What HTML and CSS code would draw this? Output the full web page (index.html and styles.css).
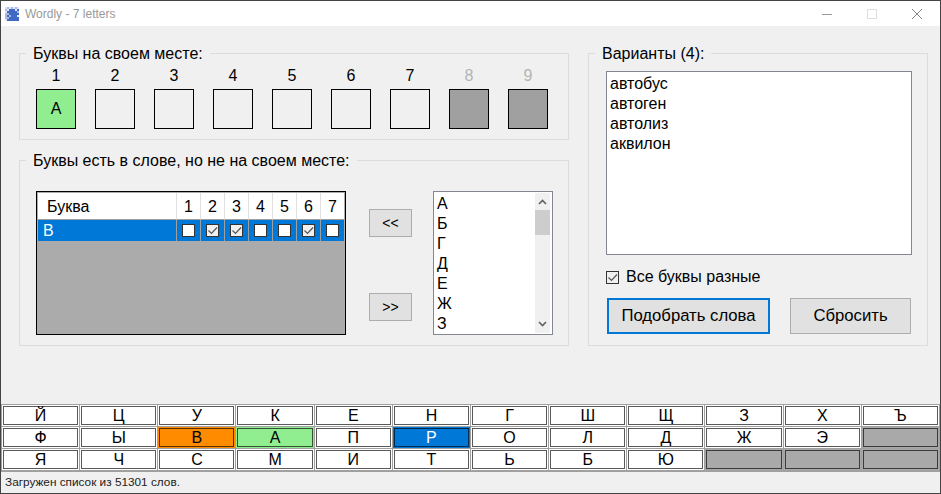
FILE: index.html
```html
<!DOCTYPE html>
<html lang="en">
<head>
    <meta charset="UTF-8">
    <meta name="viewport" content="width=device-width, initial-scale=1.0">
    <title>Wordly - 7 letters</title>
    <link rel="stylesheet" href="styles.css">
</head>
<body>
<div class="window">
    <div class="titlebar">
        <svg class="app-icon" width="14" height="14" viewBox="0 0 14 14">
            <rect width="14" height="14" fill="#a9bce6"/>
            <path d="M0 0h2v2H0zM4 0h2v2H4zM8 0h2v2H8zM12 0h2v2h-2zM2 2h2v2H2zM10 2h2v2h-2zM0 4h2v2H0zM12 8h2v2h-2zM0 12h2v2H0z" fill="#dfe6f7"/>
            <path d="M4 2h6v2H4zM12 2h2v2h-2zM2 4h10v2H2zM4 6h10v2H4zM2 8h2v2H2zM6 8h6v2H6zM4 10h10v2H4zM2 12h12v2H2z" fill="#4169c4"/>
        </svg>
        <span class="app-title">Wordly - 7 letters</span>
        <div class="controls">
            <svg width="10" height="10" viewBox="0 0 10 10"><path d="M0 5.5h10" stroke="#999" fill="none"/></svg>
            <svg width="10" height="10" viewBox="0 0 10 10"><path d="M.5.5h9v9h-9z" stroke="#ddd" fill="none"/></svg>
            <svg width="10" height="10" viewBox="0 0 10 10"><path d="M0 0l10 10M10 0L0 10" stroke="#888" fill="none"/></svg>
        </div>
    </div>

    <div class="main">
        <div class="left-col">
            <fieldset class="group group-places">
                <legend>Буквы на своем месте:</legend>
                <div class="slots">
                    <div class="slot"><span class="slot-num">1</span><span class="slot-box green">А</span></div>
                    <div class="slot"><span class="slot-num">2</span><span class="slot-box"></span></div>
                    <div class="slot"><span class="slot-num">3</span><span class="slot-box"></span></div>
                    <div class="slot"><span class="slot-num">4</span><span class="slot-box"></span></div>
                    <div class="slot"><span class="slot-num">5</span><span class="slot-box"></span></div>
                    <div class="slot"><span class="slot-num">6</span><span class="slot-box"></span></div>
                    <div class="slot"><span class="slot-num">7</span><span class="slot-box"></span></div>
                    <div class="slot off"><span class="slot-num">8</span><span class="slot-box"></span></div>
                    <div class="slot off"><span class="slot-num">9</span><span class="slot-box"></span></div>
                </div>
            </fieldset>

            <fieldset class="group group-misplaced">
                <legend>Буквы есть в слове, но не на своем месте:</legend>
                <div class="misplaced-row">
                    <div class="letters">
                        <table>
                            <thead>
                                <tr>
                                    <th class="col-letter">Буква</th>
                                    <th>1</th><th>2</th><th>3</th><th>4</th><th>5</th><th>6</th><th>7</th>
                                </tr>
                            </thead>
                            <tbody>
                                <tr>
                                    <td class="col-letter">В</td>
                                    <td><span class="check"></span></td>
                                    <td><span class="check"><svg width="11" height="11" viewBox="0 0 11 11"><path d="M1.5 5.5l3 3 5.5-6" stroke="#555" stroke-width="1.2" fill="none"/></svg></span></td>
                                    <td><span class="check"><svg width="11" height="11" viewBox="0 0 11 11"><path d="M1.5 5.5l3 3 5.5-6" stroke="#555" stroke-width="1.2" fill="none"/></svg></span></td>
                                    <td><span class="check"></span></td>
                                    <td><span class="check"></span></td>
                                    <td><span class="check"><svg width="11" height="11" viewBox="0 0 11 11"><path d="M1.5 5.5l3 3 5.5-6" stroke="#555" stroke-width="1.2" fill="none"/></svg></span></td>
                                    <td><span class="check"></span></td>
                                </tr>
                            </tbody>
                        </table>
                    </div>

                    <div class="move-buttons">
                        <button type="button" class="btn btn-move">&lt;&lt;</button>
                        <button type="button" class="btn btn-move">&gt;&gt;</button>
                    </div>

                    <div class="listbox">
                        <ul class="listbox-items">
                            <li>А</li><li>Б</li><li>Г</li><li>Д</li><li>Е</li><li>Ж</li><li>З</li>
                        </ul>
                        <div class="scrollbar">
                            <svg class="scroll-arrow" width="9" height="6" viewBox="0 0 9 6"><path d="M1 5l3.5-3.5L8 5" stroke="#606060" stroke-width="1.6" fill="none"/></svg>
                            <div class="scroll-thumb"></div>
                            <svg class="scroll-arrow scroll-down" width="9" height="6" viewBox="0 0 9 6"><path d="M1 1l3.5 3.5L8 1" stroke="#606060" stroke-width="1.6" fill="none"/></svg>
                        </div>
                    </div>
                </div>
            </fieldset>
        </div>

        <fieldset class="group group-variants">
            <legend>Варианты (4):</legend>
            <div class="variants">автобус<br>автоген<br>автолиз<br>аквилон</div>
            <div class="unique-row">
                <span class="check check-light"><svg width="11" height="11" viewBox="0 0 11 11"><path d="M1.5 5.5l3 3 5.5-6" stroke="#555" stroke-width="1.2" fill="none"/></svg></span>
                <span>Все буквы разные</span>
            </div>
            <div class="actions">
                <button type="button" class="btn btn-primary">Подобрать слова</button>
                <button type="button" class="btn btn-reset">Сбросить</button>
            </div>
        </fieldset>
    </div>

    <div class="keyboard">
        <div class="cell"><span class="key">Й</span></div>
        <div class="cell"><span class="key">Ц</span></div>
        <div class="cell"><span class="key">У</span></div>
        <div class="cell"><span class="key">К</span></div>
        <div class="cell"><span class="key">Е</span></div>
        <div class="cell"><span class="key">Н</span></div>
        <div class="cell"><span class="key">Г</span></div>
        <div class="cell"><span class="key">Ш</span></div>
        <div class="cell"><span class="key">Щ</span></div>
        <div class="cell"><span class="key">З</span></div>
        <div class="cell"><span class="key">Х</span></div>
        <div class="cell"><span class="key">Ъ</span></div>

        <div class="cell"><span class="key">Ф</span></div>
        <div class="cell"><span class="key">Ы</span></div>
        <div class="cell orange"><span class="key">В</span></div>
        <div class="cell green"><span class="key">А</span></div>
        <div class="cell"><span class="key">П</span></div>
        <div class="cell blue"><span class="key">Р</span></div>
        <div class="cell"><span class="key">О</span></div>
        <div class="cell"><span class="key">Л</span></div>
        <div class="cell"><span class="key">Д</span></div>
        <div class="cell"><span class="key">Ж</span></div>
        <div class="cell"><span class="key">Э</span></div>
        <div class="cell gray"><span class="key"></span></div>

        <div class="cell"><span class="key">Я</span></div>
        <div class="cell"><span class="key">Ч</span></div>
        <div class="cell"><span class="key">С</span></div>
        <div class="cell"><span class="key">М</span></div>
        <div class="cell"><span class="key">И</span></div>
        <div class="cell"><span class="key">Т</span></div>
        <div class="cell"><span class="key">Ь</span></div>
        <div class="cell"><span class="key">Б</span></div>
        <div class="cell"><span class="key">Ю</span></div>
        <div class="cell gray"><span class="key"></span></div>
        <div class="cell gray"><span class="key"></span></div>
        <div class="cell gray"><span class="key"></span></div>
    </div>

    <div class="statusbar">Загружен список из 51301 слов.</div>
</div>
</body>
</html>
```

FILE: styles.css
```css
* {
    box-sizing: border-box;
}

html, body {
    margin: 0;
    height: 100%;
    overflow: hidden;
}

body {
    font-family: "Liberation Sans", Arial, sans-serif;
    font-size: 16px;
    color: #000;
    background-color: #f0f0f0;
}

.window {
    width: 941px;
    height: 494px;
    display: flex;
    flex-direction: column;
    border: 1px solid #444;
}

/* title bar */
.titlebar {
    height: 25px;
    flex: none;
    display: flex;
    align-items: center;
    padding-left: 4px;
    background-color: #fff;
}

.app-icon {
    margin-top: 1px;
}

.app-title {
    margin-left: 6px;
    font-size: 12px;
    color: #999;
}

.controls {
    margin-left: auto;
    margin-right: 18px;
    display: flex;
    gap: 35px;
}

/* main area */
.main {
    height: 378px;
    flex: none;
    display: flex;
    gap: 19px;
    padding: 17px 0 0 18px;
}

.left-col {
    display: flex;
    flex-direction: column;
    gap: 10px;
}

.group {
    margin: 0;
    padding: 0;
    min-width: 0;
    border: 1px solid #dcdcdc;
}

.group legend {
    margin-left: 6px;
    padding: 0 7px;
    line-height: 21px;
}

.group-places {
    width: 550px;
    height: 97px;
}

.group-misplaced {
    width: 550px;
    height: 196px;
}

.group-variants {
    width: 340px;
    height: 303px;
}

/* fixed letters */
.slots {
    margin-left: 16px;
    display: flex;
    gap: 19px;
}

.slot {
    width: 40px;
    display: flex;
    flex-direction: column;
    align-items: center;
    gap: 3px;
}

.slot-num {
    padding-top: 1px;
    line-height: 21px;
    height: 22px;
}

.slot-box {
    width: 40px;
    height: 40px;
    display: flex;
    align-items: center;
    justify-content: center;
    border: 1px solid #000;
}

.slot-box.green {
    background-color: #90ee90;
}

.slot.off .slot-num {
    color: #b4b4b4;
}

.slot.off .slot-box {
    background-color: #a0a0a0;
}

/* misplaced letters */
.misplaced-row {
    margin: 20px 0 0 16px;
    display: flex;
}

.letters {
    width: 310px;
    height: 144px;
    padding: 1px;
    border: 1px solid #000;
    background-color: #ababab;
}

.letters table {
    border-collapse: separate;
    border-spacing: 0;
    table-layout: fixed;
    width: 306px;
}

.letters th, .letters td {
    width: 24px;
    padding: 0;
    font-weight: normal;
    text-align: center;
}

.letters th {
    height: 27px;
    padding-top: 1px;
    background-color: #fff;
    border-left: 1px solid #e0e0e0;
    border-bottom: 1px solid #a0a0a0;
}

.letters td {
    height: 21px;
    background-color: #0078d7;
    color: #fff;
    border-left: 1px solid #a0a0a0;
}

.letters .col-letter {
    width: 138px;
    border-left: none;
    text-align: left;
}

.letters th.col-letter {
    padding-left: 9px;
}

.letters td.col-letter {
    padding-left: 5px;
}

.check {
    width: 13px;
    height: 13px;
    margin: 0 auto;
    display: flex;
    align-items: center;
    justify-content: center;
    border: 1px solid #333;
    background-color: #fff;
}

.check:has(svg) {
    background-color: #f0f0f0;
}

.move-buttons {
    margin: 18px 21px 0 23px;
    display: flex;
    flex-direction: column;
    gap: 56px;
}

.btn {
    padding: 0;
    font-family: inherit;
    color: #000;
    background-color: #e1e1e1;
    border: 1px solid #adadad;
    border-radius: 0;
}

.btn-move {
    width: 43px;
    height: 28px;
    font-size: 14px;
}

/* letters list */
.listbox {
    width: 120px;
    height: 144px;
    display: flex;
    padding: 1px 2px 1px 0;
    border: 1px solid #828790;
    background-color: #fff;
}

.listbox-items {
    width: 101px;
    margin: 0;
    padding: 1px 0 0 3px;
    list-style: none;
    line-height: 20px;
    overflow: hidden;
}

.scrollbar {
    width: 15px;
    display: flex;
    flex-direction: column;
    align-items: center;
    background-color: #f0f0f0;
}

.scroll-arrow {
    margin-top: 6px;
}

.scroll-thumb {
    width: 15px;
    height: 25px;
    margin-top: 5px;
    background-color: #cdcdcd;
}

.scroll-down {
    margin-top: auto;
    margin-bottom: 6px;
}

/* variants */
.variants {
    width: 306px;
    height: 184px;
    margin: 7px 0 0 17px;
    padding: 2px 3px;
    border: 1px solid #828790;
    background-color: #fff;
    line-height: 20px;
}

.unique-row {
    height: 20px;
    margin: 12px 0 0 17px;
    display: flex;
    align-items: center;
    gap: 7px;
}

.unique-row .check {
    margin: 0;
}

.check-light {
    background-color: #f0f0f0;
}

.actions {
    margin: 11px 0 0 18px;
    display: flex;
    gap: 20px;
}

.btn-primary, .btn-reset {
    height: 36px;
    font-size: 16.7px;
}

.btn-primary {
    width: 163px;
    border: 2px solid #0078d7;
}

.btn-reset {
    width: 121px;
}

/* on-screen keyboard */
.keyboard {
    height: 68px;
    flex: none;
    display: grid;
    grid-template-columns: repeat(12, 1fr);
    grid-template-rows: repeat(3, 21px);
    gap: 1px;
    padding: 1px 1px 2px;
    background-color: #a0a0a0;
}

.cell {
    padding: 1px;
    background-color: #fff;
}

.key {
    height: 19px;
    display: flex;
    align-items: center;
    justify-content: center;
    border: 1px solid rgba(0, 0, 0, 0.65);
    font-size: 16px;
    line-height: 17px;
}

.cell.orange {
    background-color: #ff8c00;
}

.cell.green {
    background-color: #90ee90;
}

.cell.blue {
    background-color: #0078d7;
    color: #fff;
}

.cell.gray {
    background-color: #a9a9a9;
}

.statusbar {
    flex: 1;
    padding-left: 4px;
    font-size: 11.8px;
    line-height: 21px;
    color: #222;
}
```
